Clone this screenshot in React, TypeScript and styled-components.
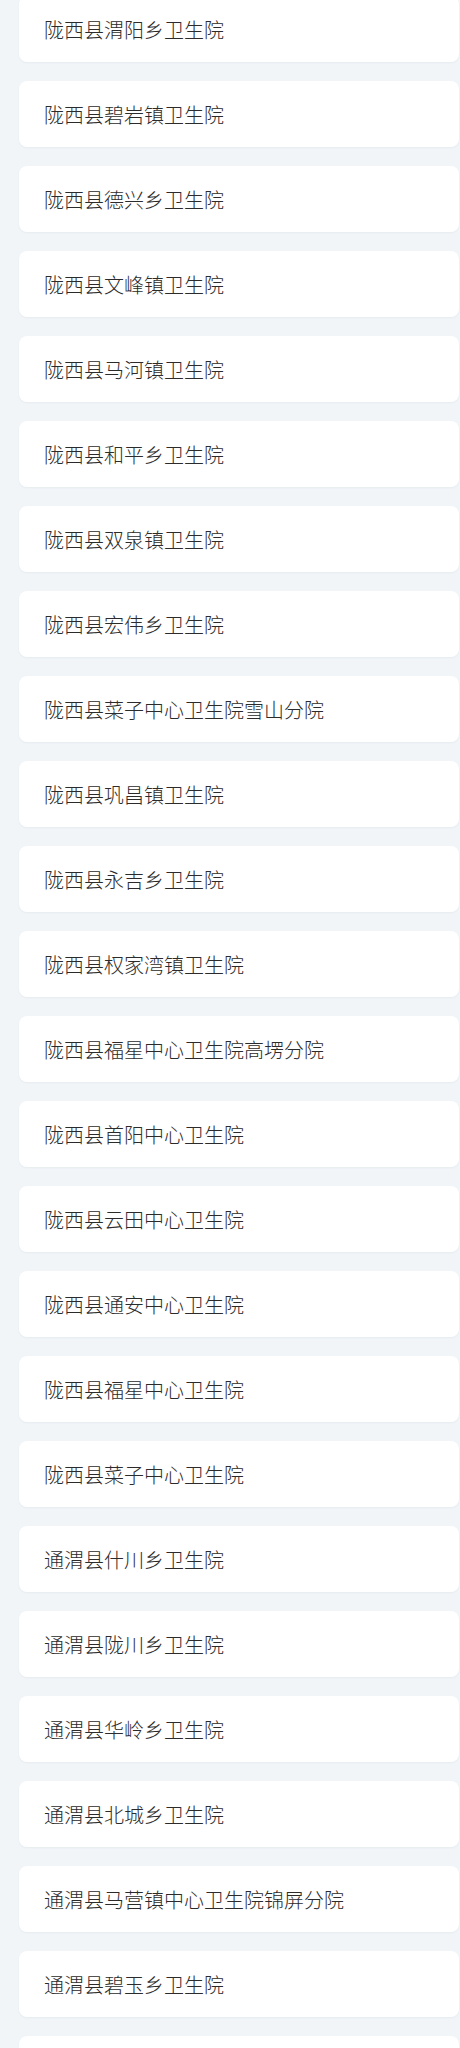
import React from 'react'
import styled, { createGlobalStyle } from 'styled-components'

const GlobalStyle = createGlobalStyle`
html, body {
    margin: 0;
    padding: 0;
    background: #f1f5f8;
    overflow: hidden;
}
`

const Page = styled.div`
display: flex;
flex-direction: column;
gap: 19px;
padding: 0 1px 0 19px;
margin-top: -4px;
font-family: "Noto Sans CJK SC", "Noto Sans", sans-serif;
`

const Card = styled.div`
height: 66px;
display: flex;
align-items: center;
padding-left: 25px;
background: #fff;
border-radius: 8px;
box-shadow: 0 1px 2px rgba(30, 50, 80, 0.05);
font-size: 20px;
font-weight: 300;
color: #2b2b2b;
`

const names = [
    '陇西县渭阳乡卫生院',
    '陇西县碧岩镇卫生院',
    '陇西县德兴乡卫生院',
    '陇西县文峰镇卫生院',
    '陇西县马河镇卫生院',
    '陇西县和平乡卫生院',
    '陇西县双泉镇卫生院',
    '陇西县宏伟乡卫生院',
    '陇西县菜子中心卫生院雪山分院',
    '陇西县巩昌镇卫生院',
    '陇西县永吉乡卫生院',
    '陇西县权家湾镇卫生院',
    '陇西县福星中心卫生院高塄分院',
    '陇西县首阳中心卫生院',
    '陇西县云田中心卫生院',
    '陇西县通安中心卫生院',
    '陇西县福星中心卫生院',
    '陇西县菜子中心卫生院',
    '通渭县什川乡卫生院',
    '通渭县陇川乡卫生院',
    '通渭县华岭乡卫生院',
    '通渭县北城乡卫生院',
    '通渭县马营镇中心卫生院锦屏分院',
    '通渭县碧玉乡卫生院',
]

const App = () => {
    return (
        <>
            <GlobalStyle />
            <Page>
                {names.map(name => (
                    <Card key={name}>{name}</Card>
                ))}
                {/* next row starts just above the bottom edge, its label is below the fold */}
                <Card />
            </Page>
        </>
    )
}

export default App
